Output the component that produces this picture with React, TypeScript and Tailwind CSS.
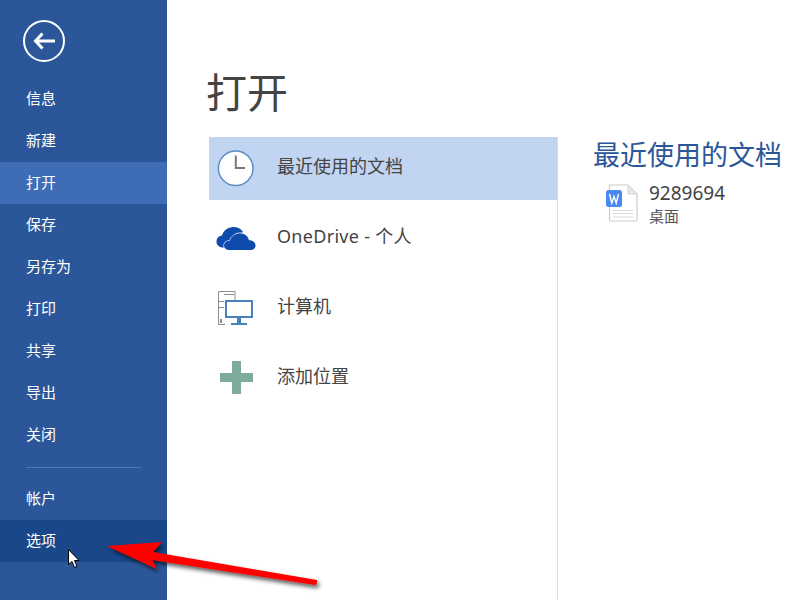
const navTop = ["信息", "新建", "打开", "保存", "另存为", "打印", "共享", "导出", "关闭"];

function NavItem({ label, tone }: { label: string; tone?: "active" | "hover" }) {
  const bg = tone === "active" ? "bg-[#3e6db5]" : tone === "hover" ? "bg-[#19478a]" : "";
  return (
    <div className={`h-[42px] flex items-center pl-[26px] pb-[2px] text-[15px] text-white ${bg}`}>
      {label}
    </div>
  );
}

function ClockIcon() {
  return (
    <svg width="38" height="38" viewBox="0 0 38 38">
      <circle cx="18.7" cy="18.2" r="17.3" fill="#ffffff" stroke="#5b8fc4" strokeWidth="1.5" />
      <path d="M18.8 5.5V18H28" fill="none" stroke="#7a7a7a" strokeWidth="2" />
    </svg>
  );
}

function CloudIcon() {
  return (
    <svg className="-mt-[2px]" width="40" height="24" viewBox="0 0 40 24">
      <path
        d="M8 21.5C3.5 21.5 0.5 19.5 0.5 15.5C0.5 12.5 2.5 10 6 9.5C7.5 4.5 12 1 17.5 1C21.5 1 25 2.8 27 6L20 10L16 20Z"
        fill="#0f4bad"
      />
      <path
        d="M12.5 24C9.8 24 8 22 8 19.6C8 16.8 10.6 14.6 13.8 14.9C15 10.4 19 7.2 24 7.2C28.6 7.2 32.2 10.2 33 14.2C36.8 14.2 39.5 16.4 39.5 19.4C39.5 22.2 37.2 24 34.4 24Z"
        fill="#0f4bad"
        stroke="#ffffff"
        strokeWidth="1.2"
        paintOrder="stroke"
      />
    </svg>
  );
}

function ComputerIcon() {
  return (
    <svg width="36" height="35" viewBox="0 0 36 35">
      <path d="M0.5 33.5V0.5H17V9" fill="none" stroke="#8c8c8c" strokeWidth="1" />
      <path d="M0.5 33.5H7M6 3.5H16M0.5 10.5H6M0.5 16.5H6" fill="none" stroke="#8c8c8c" strokeWidth="1" />
      <rect x="2" y="28" width="2" height="4" fill="#8c8c8c" />
      <rect x="8" y="10" width="26" height="16" fill="#ffffff" stroke="#4a80bb" strokeWidth="2" />
      <rect x="19" y="27" width="4" height="5" fill="#4a80bb" />
      <rect x="13" y="32" width="16" height="2" fill="#4a80bb" />
    </svg>
  );
}

function PlusIcon() {
  return (
    <svg className="-mt-[2px]" width="33" height="33" viewBox="0 0 33 33">
      <path d="M12 0H21V12H33V21H21V33H12V21H0V12H12Z" fill="#7eab9a" />
    </svg>
  );
}

function WordFileIcon() {
  return (
    <svg className="mt-[4px]" width="32" height="38" viewBox="0 0 32 38">
      <path
        d="M3.5 1H22L31 10V35.5C31 36.6 30.2 37 29.5 37H5C3.8 37 3.5 36.2 3.5 35.5Z"
        fill="#ffffff"
        stroke="#cccccc"
        strokeWidth="1.2"
      />
      <path d="M22 1V10H31Z" fill="#e8e8e8" stroke="#d4d4d4" strokeWidth="1" />
      <path d="M7 26.5H27M7 29.5H27M7 33H27" stroke="#d8d8d8" strokeWidth="1" />
      <rect x="0" y="6" width="16" height="17" rx="2.5" fill="#4a8af0" />
      <path d="M3.5 10L5.8 19L8 12.5L10.2 19L12.5 10" fill="none" stroke="#ffffff" strokeWidth="1.4" />
    </svg>
  );
}

function PlaceRow({
  icon,
  label,
  active,
  labelClass,
}: {
  icon: React.ReactNode;
  label: string;
  active?: boolean;
  labelClass?: string;
}) {
  return (
    <div className={`flex items-center h-[63px] mb-[7px] ${active ? "bg-[#c1d4f1]" : ""}`}>
      <div className="w-[54px] mr-[14px] flex justify-center">{icon}</div>
      <span className={`pb-[5px] text-[18px] text-[#444444] ${labelClass ?? ""}`}>{label}</span>
    </div>
  );
}

export default function App() {
  return (
    <div
      className="relative w-[800px] h-[600px] overflow-hidden flex bg-white"
      style={{ fontFamily: '"Noto Sans", "Noto Sans CJK SC", sans-serif' }}
    >
      <aside className="w-[167px] shrink-0 bg-[#2b579a] pt-5">
        <div className="ml-[23px] w-[42px] h-[42px] mb-4 rounded-full border-2 border-white flex items-center justify-center">
          <svg width="22" height="18" viewBox="0 0 22 18">
            <path d="M9.5 1.5L2.5 9L9.5 16.5M3 9H22" fill="none" stroke="#ffffff" strokeWidth="3" />
          </svg>
        </div>
        {navTop.map((n) => (
          <NavItem key={n} label={n} tone={n === "打开" ? "active" : undefined} />
        ))}
        <div className="mx-[26px] mt-[11px] mb-[10px] h-px bg-[#5079b3]" />
        <NavItem label="帐户" />
        <NavItem label="选项" tone="hover" />
      </aside>

      <main className="flex-1 flex flex-col">
        <h1 className="pl-[39px] pt-[62px] h-[137px] text-[41px] leading-[60px] text-[#444444] font-normal">
          打开
        </h1>
        <div className="flex flex-1">
          <div className="ml-[42px] w-[349px] border-r border-[#dddddd]">
            <PlaceRow icon={<ClockIcon />} label="最近使用的文档" active />
            <PlaceRow icon={<CloudIcon />} label="OneDrive - 个人" labelClass="tracking-[0.3px]" />
            <PlaceRow icon={<ComputerIcon />} label="计算机" />
            <PlaceRow icon={<PlusIcon />} label="添加位置" />
          </div>
          <div className="pl-[35px] pt-px">
            <div className="text-[27px] leading-[34px] text-[#2b579a] whitespace-nowrap">最近使用的文档</div>
            <div className="flex mt-[8px] ml-[13px]">
              <WordFileIcon />
              <div className="ml-[11px]">
                <div className="text-[19px] leading-[26px] text-[#444444]">9289694</div>
                <div className="text-[15px] leading-[20px] text-[#555555]">桌面</div>
              </div>
            </div>
          </div>
        </div>
      </main>

      <svg className="absolute left-[100px] top-[530px]" width="230" height="70" viewBox="0 0 230 70">
        <defs>
          <filter id="arrowShadow" x="-10%" y="-30%" width="120%" height="170%">
            <feDropShadow dx="2" dy="3" stdDeviation="2" floodColor="#000000" floodOpacity="0.65" />
          </filter>
        </defs>
        <path
          d="M7 16L62 12L53 22L217 50Q218 54 215 55L52 30L57 39Z"
          fill="#ff0000"
          filter="url(#arrowShadow)"
        />
      </svg>

      <svg className="absolute left-[68px] top-[549px]" width="13" height="20" viewBox="0 0 13 20">
        <path d="M0.5 0.5V15.5L4 12.5L6.5 18.5L9 17.5L6.5 11.5H11Z" fill="#ffffff" stroke="#000000" strokeWidth="1" />
      </svg>
    </div>
  );
}
